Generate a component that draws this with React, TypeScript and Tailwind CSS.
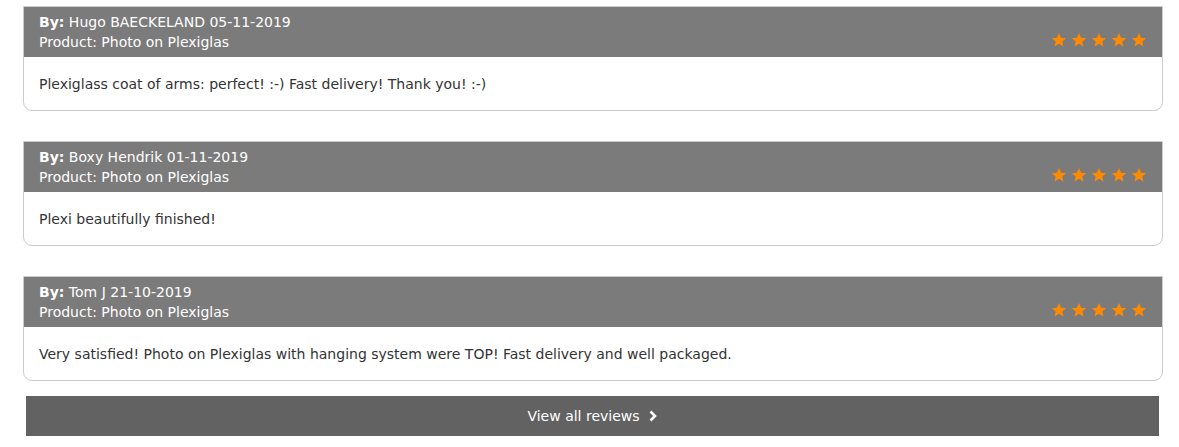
import React from 'react';

const reviews = [
  { name: 'Hugo BAECKELAND', date: '05-11-2019', text: 'Plexiglass coat of arms: perfect! :-) Fast delivery! Thank you! :-)' },
  { name: 'Boxy Hendrik', date: '01-11-2019', text: 'Plexi beautifully finished!' },
  { name: 'Tom J', date: '21-10-2019', text: 'Very satisfied! Photo on Plexiglas with hanging system were TOP! Fast delivery and well packaged.' },
];

const Star = () => (
  <svg width="16" height="16" viewBox="0 0 24 24">
    <path d="M12 1.5l3.1 7.1 7.7.6-5.9 5 1.8 7.5L12 17.7l-6.7 4 1.8-7.5-5.9-5 7.7-.6z" fill="#ff8a00" />
  </svg>
);

const App = () => {
  return (
    <div className="w-[1179px] h-[447px] bg-white pt-[6px] font-['DejaVu_Sans',Verdana,sans-serif] text-[14px]">
      <div className="ml-[23px] w-[1140px] flex flex-col gap-[30px]">
        {reviews.map((r, i) => (
          <div key={i} className="border border-[#cccccc] rounded-b-[9px] bg-white">
            {/* header */}
            <div className="bg-[#7b7b7b] text-white h-[50px] pl-[15px] pr-[15px] flex items-start justify-between pt-[5px]">
              <div className="leading-[20px]">
                <div><span className="font-bold">By:</span> {r.name} {r.date}</div>
                <div>Product: Photo on Plexiglas</div>
              </div>
              <div className="flex gap-[4px] mt-[20px]">
                <Star /><Star /><Star /><Star /><Star />
              </div>
            </div>
            {/* body */}
            <div className="h-[53px] pl-[15px] pt-[17px] text-[#333333] leading-[20px]">{r.text}</div>
          </div>
        ))}
      </div>
      <div className="ml-[26px] mt-[15px] w-[1133px] h-[40px] bg-[#626262] text-white flex items-center justify-center gap-[8px] text-[14px]">
        <span>View all reviews</span>
        <svg width="10" height="12" viewBox="0 0 10 12">
          <path d="M2.5 1.5L7 6l-4.5 4.5" stroke="white" strokeWidth="2.6" fill="none" />
        </svg>
      </div>
    </div>
  );
};

export default App;
